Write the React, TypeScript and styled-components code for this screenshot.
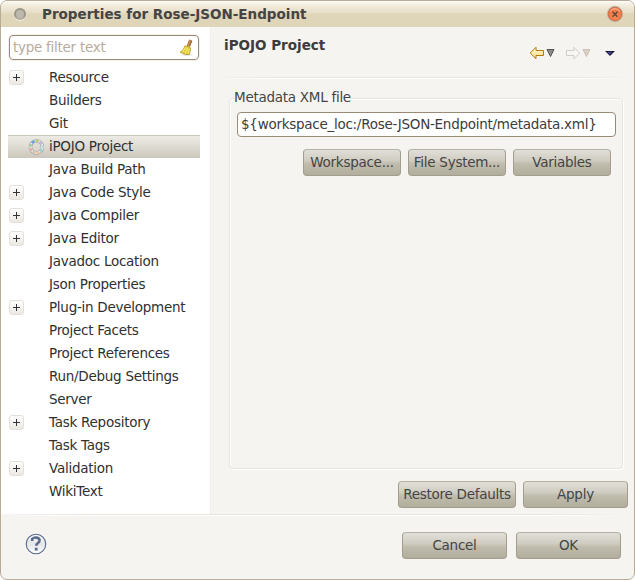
import React from 'react';
import styled, { createGlobalStyle } from 'styled-components';

const GlobalStyle = createGlobalStyle`
  * { box-sizing: border-box; }
  html, body { margin: 0; background: #fff; }
  body { font: 13.5px 'DejaVu Sans', sans-serif; letter-spacing: -0.27px; color: #3c3c3c; overflow: hidden; }
  button, input { font: inherit; color: inherit; letter-spacing: inherit; }
`;

const Window = styled.div`
  width: 635px;
  height: 580px;
  display: flex;
  flex-direction: column;
  background: #f6f4f1;
  border: 1px solid #b8ab98;
  border-radius: 7px;
  overflow: hidden;
`;

const TitleBar = styled.header`
  height: 26px;
  flex: none;
  display: flex;
  align-items: center;
  padding: 0 10px 0 13px;
  background: linear-gradient(#fffefb 0, #f4efe2 3px, #e6ddc6 12px, #dfd5b9 13px, #dfd5b9 100%);
`;

const MenuDot = styled.span`
  width: 12px;
  height: 12px;
  border-radius: 50%;
  border: 2px solid #9b9587;
  border-bottom-color: #b4ad9d;
  background: #bdb8ad;
  box-shadow: 0 1px 1px #fff9;
`;

const Title = styled.h1`
  flex: 1;
  margin: 0 0 0 16px;
  font-size: 13.5px;
  letter-spacing: 0;
  line-height: 24px;
  color: #444;
`;

const Body = styled.div`
  height: 487px;
  flex: none;
  display: flex;
`;

const Sidebar = styled.aside`
  width: 209px;
  flex: none;
  background: #fff;
  padding: 8px 10px 0 7px;
`;

const FilterBox = styled.label`
  display: flex;
  align-items: center;
  width: 190px;
  height: 25px;
  margin: 0 0 0 1px;
  padding: 0 4px 0 3px;
  border: 1px solid #988a75;
  border-radius: 4px;
  box-shadow: 0 0 0 1px #f4f1ec;
`;

const FilterInput = styled.input`
  flex: 1;
  min-width: 0;
  padding: 0 0 2px;
  border: 0;
  outline: 0;
  background: none;
  &::placeholder { color: #b9ab9b; opacity: 1; }
`;

const Tree = styled.ul`
  list-style: none;
  margin: 6px 0 0;
  padding: 0;
`;

const TreeRow = styled.li<{ $selected?: boolean }>`
  height: 23px;
  display: grid;
  grid-template-columns: 20px 21px auto;
  align-items: center;
  white-space: nowrap;
  color: #303030;
  background: ${p => (p.$selected ? 'linear-gradient(#c9c5bb 0 1px, #eceae4 1px, #e2dfd8 40%, #cbc7bb)' : 'none')};
`;

const TreeLabel = styled.span`
  padding-bottom: 2px;
`;

const Expander = styled.span`
  width: 15px;
  height: 15px;
  margin-left: 1px;
  display: block;
  border: 1px solid #e4dfd8;
  border-radius: 3px;
  background: linear-gradient(#fff, #ece8e2);
  svg { display: block; }
`;

const Page = styled.main`
  flex: 1;
  border-left: 1px solid #efedea;
  display: flex;
  flex-direction: column;
  padding: 0 6px 0 13px;
`;

const PageHeader = styled.div`
  height: 50px;
  display: flex;
  justify-content: space-between;
  padding: 8px 8px 0 0;
`;

const PageTitle = styled.h2`
  margin: 0;
  font-size: 13.5px;
  letter-spacing: 0;
  line-height: 20px;
  color: #3c3c3c;
`;

const NavSlot = styled.div`
  padding-top: 9px;
  svg { display: block; }
`;

const Separator = styled.div`
  height: 2px;
  flex: none;
  background: linear-gradient(90deg, #f6f4f1, #e8e5df 15%, #e8e5df 85%, #f6f4f1) top / 100% 1px no-repeat,
    linear-gradient(90deg, #f6f4f1, #fff 15%, #fff 85%, #f6f4f1) bottom / 100% 1px no-repeat;
`;

const PageSeparator = styled(Separator)`
  margin: 0 -6px 0 -13px;
`;

const Group = styled.fieldset`
  height: 380px;
  min-width: 0;
  margin: 10px 5px 0 5px;
  padding: 5px 6px 5px 7px;
  border: 1px solid #e7e4dc;
  border-radius: 4px;
  box-shadow: inset 1px 1px 0 #fff, 1px 1px 0 #fff;
`;

const Legend = styled.legend`
  height: 18px;
  padding: 0;
  margin-left: -3px;
  line-height: 16px;
  color: #444;
`;

const PathInput = styled.input`
  display: block;
  width: 379px;
  height: 25px;
  padding: 0 3px 2px;
  border: 1px solid #988a75;
  border-radius: 4px;
  background: #fff;
  outline: 0;
`;

const ButtonRow = styled.div<{ $top: number; $right: number; $gap: number }>`
  display: flex;
  justify-content: flex-end;
  gap: ${p => p.$gap}px;
  padding: ${p => p.$top}px ${p => p.$right}px 0 0;
`;

const PushButton = styled.button<{ $width: number }>`
  width: ${p => p.$width}px;
  height: 27px;
  padding: 0 0 2px;
  white-space: nowrap;
  color: #444;
  border: 1px solid #a39d8e;
  border-top-color: #b4b0a4;
  border-radius: 4px;
  background: linear-gradient(#e1dfd8, #cfccc1 42%, #c0bdae 55%, #b2ad9d);
`;

const Footer = styled.footer`
  flex: 1;
`;

const FooterContent = styled.div`
  display: flex;
  justify-content: space-between;
  padding: 0 13px 0 24px;
`;

const HelpSlot = styled.div`
  padding-top: 17px;
`;

const Broom = () => (
  <svg width="16" height="18" viewBox="0 0 16 18">
    <ellipse cx="9" cy="15.7" rx="6" ry="1.2" fill="#e8e8e8" />
    <path d="m12.8 1.2-2.4 6" stroke="#94602c" strokeWidth="3.4" />
    <path d="M12.4 1.2 10.2 7" stroke="#cf9550" strokeWidth="1.5" />
    <path d="m7 6.8 5 1.4.6 2.4-1.5 5-3.6-.2-5.3-2.2 2.9-2.4z" fill="#e4d13c" stroke="#a8941b" strokeWidth=".8" />
    <path d="m7.4 8.3-3 5m5-4.2-2 5.6m4-4.6-1.2 4.6" stroke="#fbf3a0" strokeWidth=".8" />
  </svg>
);

const PlusIcon = () => (
  <svg width="13" height="13" viewBox="0 0 13 13">
    <path d="M3 6.5h7M6.5 3v7" stroke="#333" />
  </svg>
);

const ringColors = ['#a9c96f', '#c9b2dc', '#b4dce6', '#9bd1d6', '#f0c08d', '#d6c3b4', '#eaa6a6', '#a6d19a', '#5d95d6'];
const IpojoIcon = () => (
  <svg width="16" height="16" viewBox="0 0 16 16">
    <circle cx="8.5" cy="8" r="6" fill="none" stroke="#9c9c98" strokeWidth="3.4" />
    <circle cx="8.5" cy="8" r="6" fill="none" stroke="#f4f4f1" strokeWidth="2.3" />
    {ringColors.map((c, i) => (
      <circle key={c} cx="8.5" cy="8" r="6" fill="none" stroke={c} strokeWidth="2" pathLength="90" strokeDasharray="8 82" strokeDashoffset={25 - i * 10} />
    ))}
  </svg>
);

const CloseIcon = () => (
  <svg width="18" height="18" viewBox="0 0 18 18">
    <defs>
      <radialGradient id="close" cy=".65">
        <stop offset="0" stopColor="#ff8a55" />
        <stop offset="1" stopColor="#f5743f" />
      </radialGradient>
    </defs>
    <circle cx="9" cy="9" r="8.2" fill="#c7c0b0" />
    <circle cx="9" cy="9" r="6.9" fill="url(#close)" stroke="#b96f51" strokeWidth=".8" />
    <path d="M4.2 6.2a6 6 0 0 1 9.6 0" fill="none" stroke="#ffc3a5" />
    <path d="m6.5 6.8 5 5m0-5-5 5" stroke="#5b4a43" strokeWidth="1.5" />
  </svg>
);

const NavIcons = () => (
  <svg width="90" height="18" viewBox="0 0 90 18">
    <defs>
      <linearGradient id="gold" x2="0" y2="1">
        <stop stopColor="#fffbe0" />
        <stop offset="1" stopColor="#f7d77c" />
      </linearGradient>
    </defs>
    <path d="M.2 9 6 3.2v3.3h7.5v5H6v3.3z" fill="url(#gold)" stroke="#b57a0c" />
    <path d="M17 5.5h7L20.5 12.5z" fill="#8b8b8b" stroke="#555" />
    <path d="M49.6 9 43.8 3.2v3.3h-7.3v5h7.3v3.3z" fill="#f8f7f4" stroke="#cfcdc9" />
    <path d="M53 5.5h7L56.5 12.5z" fill="#d9d1c5" stroke="#c9bfb2" />
    <path d="M75 7h10l-5 5z" fill="#1b1b35" />
    <path d="M77 8h5L80 10.5z" fill="#4b4495" />
  </svg>
);

const HelpIcon = () => (
  <svg width="22" height="22" viewBox="0 0 22 22">
    <defs>
      <linearGradient id="help" x2="0" y2="1">
        <stop stopColor="#fff" />
        <stop offset=".5" stopColor="#e4e5e9" />
        <stop offset="1" stopColor="#fff" />
      </linearGradient>
    </defs>
    <circle cx="11" cy="11" r="9.8" fill="url(#help)" stroke="#54698c" strokeWidth="1.1" />
    <path d="M7.2 8V5.8C9 4 14.4 3.9 14.6 7.4c.1 2.6-3.4 2.6-3.4 5.4" fill="none" stroke="#5b6c8c" strokeWidth="2.6" />
    <path d="M9.8 14.8h2.8v2.6H9.8z" fill="#5b6c8c" />
  </svg>
);

type Item = { label: string; expandable?: boolean; selected?: boolean };
const items: Item[] = [
  { label: 'Resource', expandable: true },
  { label: 'Builders' },
  { label: 'Git' },
  { label: 'iPOJO Project', selected: true },
  { label: 'Java Build Path' },
  { label: 'Java Code Style', expandable: true },
  { label: 'Java Compiler', expandable: true },
  { label: 'Java Editor', expandable: true },
  { label: 'Javadoc Location' },
  { label: 'Json Properties' },
  { label: 'Plug-in Development', expandable: true },
  { label: 'Project Facets' },
  { label: 'Project References' },
  { label: 'Run/Debug Settings' },
  { label: 'Server' },
  { label: 'Task Repository', expandable: true },
  { label: 'Task Tags' },
  { label: 'Validation', expandable: true },
  { label: 'WikiText' },
];

export default function App() {
  return (
    <>
      <GlobalStyle />
      <Window>
        <TitleBar>
          <MenuDot />
          <Title>Properties for Rose-JSON-Endpoint</Title>
          <CloseIcon />
        </TitleBar>
        <Body>
          <Sidebar>
            <FilterBox>
              <FilterInput placeholder="type filter text" />
              <Broom />
            </FilterBox>
            <Tree>
              {items.map(item => (
                <TreeRow key={item.label} $selected={item.selected}>
                  <span>{item.expandable && <Expander><PlusIcon /></Expander>}</span>
                  {item.selected ? <IpojoIcon /> : <span />}
                  <TreeLabel>{item.label}</TreeLabel>
                </TreeRow>
              ))}
            </Tree>
          </Sidebar>
          <Page>
            <PageHeader>
              <PageTitle>iPOJO Project</PageTitle>
              <NavSlot><NavIcons /></NavSlot>
            </PageHeader>
            <PageSeparator />
            <Group>
              <Legend>Metadata XML file</Legend>
              <PathInput defaultValue="${workspace_loc:/Rose-JSON-Endpoint/metadata.xml}" />
              <ButtonRow $top={12} $right={5} $gap={7}>
                <PushButton $width={98}>Workspace...</PushButton>
                <PushButton $width={98}>File System...</PushButton>
                <PushButton $width={98}>Variables</PushButton>
              </ButtonRow>
            </Group>
            <ButtonRow $top={12} $right={0} $gap={7}>
              <PushButton $width={118}>Restore Defaults</PushButton>
              <PushButton $width={105}>Apply</PushButton>
            </ButtonRow>
          </Page>
        </Body>
        <Footer>
          <Separator />
          <FooterContent>
            <HelpSlot><HelpIcon /></HelpSlot>
            <ButtonRow $top={16} $right={0} $gap={9}>
              <PushButton $width={105}>Cancel</PushButton>
              <PushButton $width={105}>OK</PushButton>
            </ButtonRow>
          </FooterContent>
        </Footer>
      </Window>
    </>
  );
}
